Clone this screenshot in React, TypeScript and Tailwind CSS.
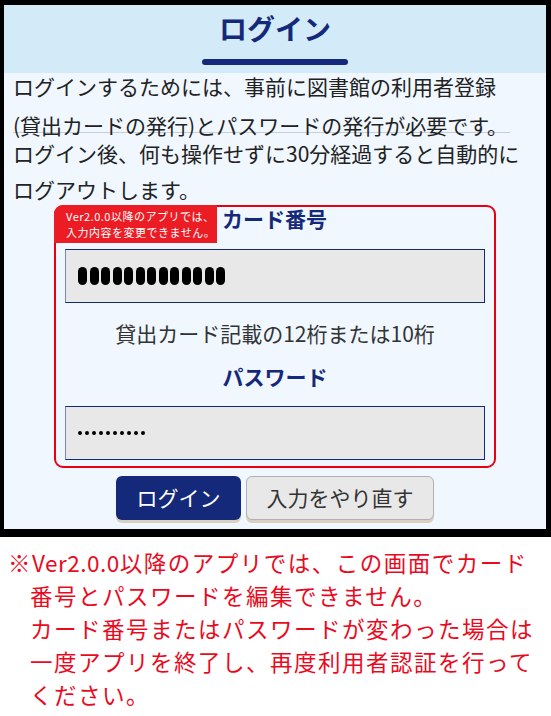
const jp = { fontFamily: '"Noto Sans CJK JP", "Noto Sans", sans-serif' };

function BigDots({ count }: { count: number }) {
  return (
    <div className="flex items-center gap-[2.5px]">
      {Array.from({ length: count }).map((_, i) => (
        <span key={i} className="block w-[9px] h-[18px] rounded-full bg-black" />
      ))}
    </div>
  );
}

function SmallDots({ count }: { count: number }) {
  return (
    <div className="flex items-center gap-[3px]">
      {Array.from({ length: count }).map((_, i) => (
        <span key={i} className="block w-[4px] h-[4px] rounded-full bg-black" />
      ))}
    </div>
  );
}

export default function App() {
  return (
    <div className="w-[551px] min-h-[716px] bg-white" style={jp}>
      {/* App screenshot frame */}
      <div className="bg-black pt-[5px] pl-[4px] pr-[5px] pb-[8px]">
        <div className="bg-[#f0f7fe]">
          {/* Header */}
          <div className="h-[68px] bg-[#d3eaf8] flex flex-col items-center pt-[6px]">
            <h1 className="text-[28px] leading-[34px] font-bold text-[#14297a]">ログイン</h1>
            <div className="mt-[14px] w-[146px] h-[6px] rounded-full bg-[#14297a]" />
          </div>

          {/* Intro text */}
          <div className="pl-[9px] text-[21px] text-[#222] whitespace-nowrap">
            <div className="h-[26px] leading-[26px]">ログインするためには、事前に図書館の利用者登録</div>
            <div className="mt-[12px] h-[28px] flex items-center">
              <span className="inline-block leading-[14px] border-b border-[#c9ced4] pr-[2px]">
                (貸出カードの発行)とパスワードの発行が必要です。
              </span>
            </div>
            <div className="h-[28px] leading-[28px]">ログイン後、何も操作せずに30分経過すると自動的に</div>
            <div className="mt-[8px] h-[28px] leading-[28px]">ログアウトします。</div>
          </div>

          {/* Form box */}
          <div className="mt-[2px] ml-[50px] w-[442px] border-2 border-[#e60012] rounded-[9px] pb-[6px]">
            <div className="flex items-start">
              <div className="-ml-[2px] -mt-[2px] w-[163px] h-[38px] bg-[#ec1c24] rounded-tl-[9px] flex flex-col justify-center pl-[12px] text-white text-[11px] leading-[16px] tracking-[0.5px]">
                <span>Ver2.0.0以降のアプリでは、</span>
                <span>入力内容を変更できません。</span>
              </div>
              <div className="ml-[5px] mt-[-3px] text-[21px] leading-[28px] font-bold text-[#14297a]">カード番号</div>
            </div>

            <div className="mt-[6px] mx-[9px] h-[54px] bg-[#e8e8e8] border border-[#14297a] border-l-[#7b8ab5] flex items-center pl-[12px]">
              <BigDots count={13} />
            </div>

            <div className="mt-[16px] h-[28px] leading-[28px] text-center text-[21px] text-[#333]">
              貸出カード記載の12桁または10桁
            </div>

            <div className="mt-[15px] h-[28px] leading-[28px] text-center text-[21px] font-bold text-[#14297a]">
              パスワード
            </div>

            <div className="mt-[16px] mx-[9px] h-[54px] bg-[#e8e8e8] border border-[#14297a] border-l-[#7b8ab5] flex items-center pl-[12px]">
              <SmallDots count={10} />
            </div>
          </div>

          {/* Buttons */}
          <div className="mt-[8px] pb-[9px] flex justify-center gap-[5px]">
            <button className="w-[125px] h-[44px] rounded-[6px] bg-[#14297a] text-white text-[21px] shadow-[0_3px_0_#d8cfc0]">
              ログイン
            </button>
            <button className="w-[188px] h-[44px] rounded-[6px] bg-[#e8e8e8] border border-[#b0b0b0] text-[#333] text-[21px] shadow-[0_3px_0_#d8cfc0]">
              入力をやり直す
            </button>
          </div>
        </div>
      </div>

      {/* Notice */}
      <div className="pt-[9px] pl-[8px] text-[22.5px] leading-[33px] tracking-[1.5px] text-[#ea0a1e] whitespace-nowrap">
        <div>
          ※<span className="tracking-[0.5px]">Ver2.0.0</span>以降のアプリでは、この画面でカード
        </div>
        <div className="pl-[22px]">番号とパスワードを編集できません。</div>
        <div className="pl-[22px]">カード番号またはパスワードが変わった場合は</div>
        <div className="pl-[22px]">一度アプリを終了し、再度利用者認証を行って</div>
        <div className="pl-[22px]">ください。</div>
      </div>
    </div>
  );
}
